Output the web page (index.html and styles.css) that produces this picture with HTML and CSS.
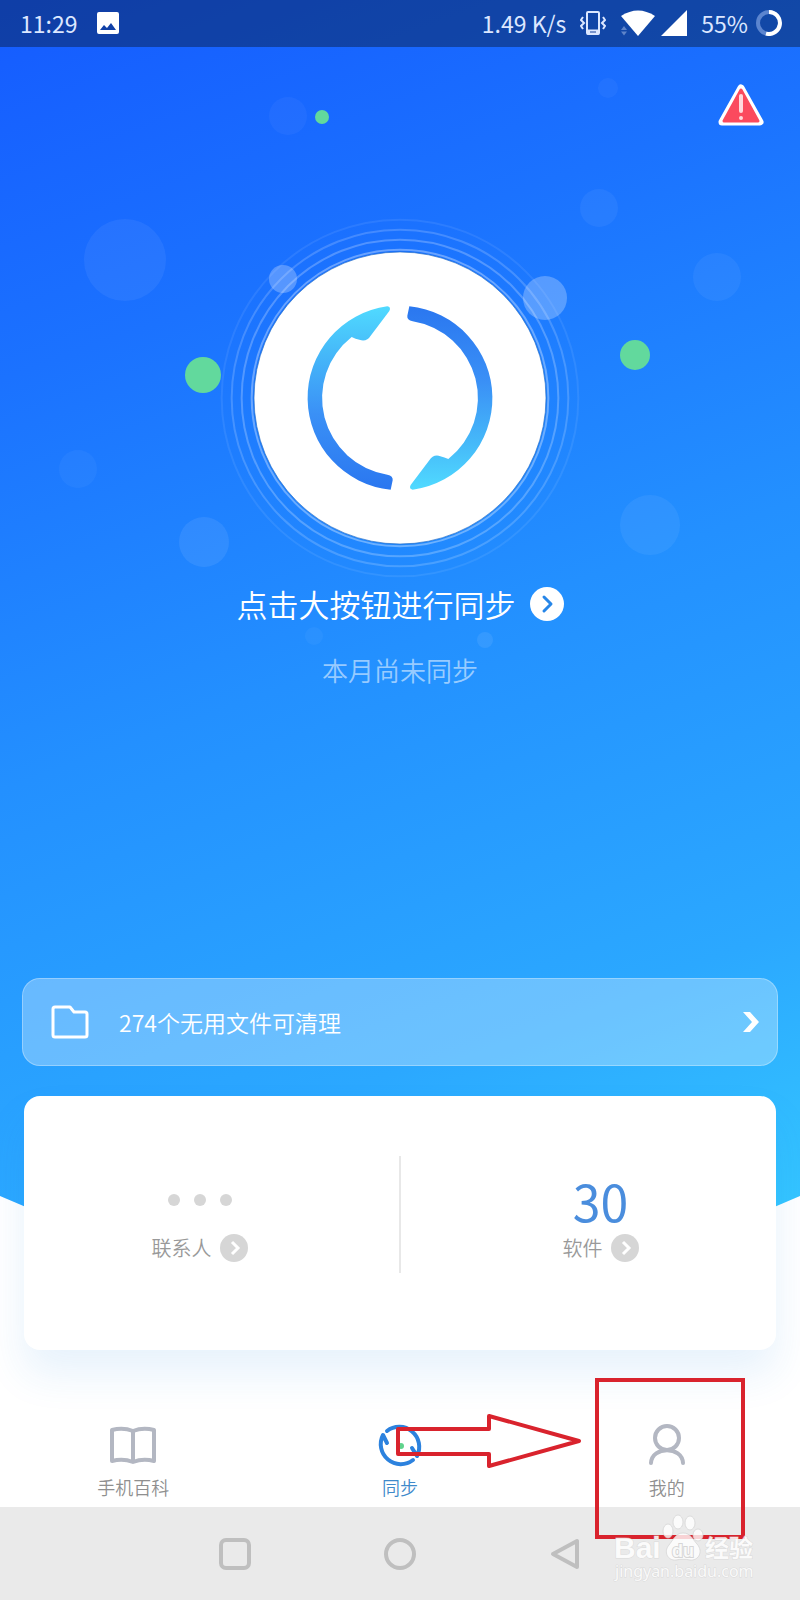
FILE: index.html
```
<!DOCTYPE html>
<html lang="zh-CN">

<head>
    <meta charset="UTF-8">
    <meta name="viewport" content="width=device-width, initial-scale=1.0">
    <title>同步</title>
    <link rel="stylesheet" href="styles.css">
</head>

<body>
    <div class="screen">
        <div class="hero">
            <!-- Floating bubbles -->
            <svg class="bubbles" viewBox="0 0 800 1230" preserveAspectRatio="xMidYMin slice" aria-hidden="true">
                <g fill="#fff" fill-opacity="0.06">
                    <circle cx="288" cy="116" r="19" fill-opacity="0.04" />
                    <circle cx="608" cy="88" r="10" fill-opacity="0.04" />
                    <circle cx="599" cy="208" r="19" fill-opacity="0.05" />
                    <circle cx="717" cy="277" r="24" fill-opacity="0.05" />
                    <circle cx="125" cy="260" r="41" />
                    <circle cx="78" cy="469" r="19" fill-opacity="0.04" />
                    <circle cx="204" cy="542" r="25" fill-opacity="0.08" />
                    <circle cx="650" cy="525" r="30" />
                    <circle cx="314" cy="636" r="9" fill-opacity="0.04" />
                    <circle cx="485" cy="640" r="8" fill-opacity="0.08" />
                    <circle cx="283" cy="279" r="14" fill-opacity="0.26" />
                    <circle cx="545" cy="298" r="22" fill-opacity="0.26" />
                </g>
                <g fill="#62d99d">
                    <circle cx="322" cy="117" r="7" />
                    <circle cx="635" cy="355" r="15" />
                    <circle cx="203" cy="375" r="18" />
                </g>
            </svg>

            <!-- Status bar -->
            <div class="status-bar">
                <span>11:29</span>
                <svg class="status-photo" width="22" height="22" viewBox="0 0 22 22">
                    <path fill="#fff" fill-rule="evenodd" d="M2 0h18a2 2 0 0 1 2 2v18a2 2 0 0 1-2 2H2a2 2 0 0 1-2-2V2a2 2 0 0 1 2-2zM3 18h16l-5-7-4 5-3-3z" />
                </svg>
                <span class="status-speed">1.49 K/s</span>
                <svg width="26" height="26" viewBox="0 0 26 26" fill="none" stroke="#dce7ff" stroke-width="2">
                    <rect x="7" y="2" width="12" height="22" rx="1" />
                    <path d="M7 22h12" stroke-width="5" />
                    <path d="M10 22h6" stroke="#123f98" stroke-width="1" />
                    <path d="M3 7L1 10l3 3-3 3 2 3M23 7l2 3-3 3 3 3-2 3" />
                </svg>
                <svg class="status-wifi" width="34" height="26" viewBox="0 0 34 26">
                    <path fill="#fff" d="M17 26L0 6Q17-5 34 6z" />
                    <path fill="#5f84c9" d="M0 20l3-4 3 4zM0 21.500h6l-3 4z" />
                </svg>
                <svg class="status-signal" width="26" height="26" viewBox="0 0 26 26">
                    <path fill="#fff" d="M26 0v26H0z" />
                </svg>
                <span class="status-battery">55%</span>
                <svg width="26" height="26" viewBox="0 0 26 26" fill="none" stroke-width="4">
                    <circle cx="13" cy="13" r="11" stroke="#5c85cf" />
                    <path d="M13 2a11 11 0 1 1-3 21.600" stroke="#fff" />
                </svg>
            </div>

            <button type="button" class="warning" aria-label="警告">
                <svg width="46" height="43" viewBox="0 0 46 43">
                    <path d="M23 4L42 38H4z" fill="#fff" stroke="#fff" stroke-width="7" stroke-linejoin="round" />
                    <path d="M23 6L40 37H6z" fill="#fb4a5e" stroke="#fb4a5e" stroke-width="3" stroke-linejoin="round" />
                    <path d="M23 12v15" stroke="#ffd9dd" stroke-width="4" stroke-linecap="round" />
                    <circle cx="23" cy="34" r="2" fill="#ffd9dd" />
                </svg>
            </button>

            <button type="button" class="sync-button" aria-label="同步">
                <svg width="360" height="360" viewBox="60 25 1080 1080">
                    <defs>
                        <linearGradient id="arc" gradientUnits="userSpaceOnUse" x1="700" y1="300" x2="700" y2="840">
                            <stop offset="0" stop-color="#2b78f0" />
                            <stop offset="0.4" stop-color="#3a90f6" />
                            <stop offset="0.75" stop-color="#46baf9" />
                            <stop offset="1" stop-color="#50daff" />
                        </linearGradient>
                        <path id="arrow" fill="url(#arc)" d="M628 290A277 277 0 0 1 638 840Q626 838 632 826L688 752Q698 735 716 738Q736 743 745 748A233 233 0 0 0 638 335Q620 331 622 318Z" />
                    </defs>
                    <g fill="none" stroke="#fff" stroke-width="6">
                        <circle cx="600" cy="565" r="535" stroke-opacity="0.08" />
                        <circle cx="600" cy="565" r="505" stroke-opacity="0.18" />
                        <circle cx="600" cy="565" r="475" stroke-opacity="0.24" />
                        <circle cx="600" cy="565" r="445" stroke-opacity="0.34" />
                    </g>
                    <circle cx="600" cy="565" r="438" fill="#fff" stroke="#2b6fc4" stroke-width="2" />
                    <use href="#arrow" />
                    <use href="#arrow" transform="rotate(180 600 565)" />
                </svg>
            </button>

            <a href="#" class="sync-hint">
                点击大按钮进行同步
                <svg width="34" height="34" viewBox="0 0 34 34">
                    <circle cx="17" cy="17" r="17" fill="#fff" />
                    <path d="M14 10l7 7-7 7" fill="none" stroke="#2786e8" stroke-width="3" stroke-linecap="round" stroke-linejoin="round" />
                </svg>
            </a>
            <p class="sync-status">本月尚未同步</p>

            <a href="#" class="clean-banner">
                <svg width="38" height="34" viewBox="0 0 38 34" fill="none" stroke="#fff" stroke-width="3" stroke-linejoin="round">
                    <path d="M4 2h15l4 5h11a2 2 0 0 1 2 2v21a2 2 0 0 1-2 2H4a2 2 0 0 1-2-2V4a2 2 0 0 1 2-2z" />
                </svg>
                <span class="clean-text">274个无用文件可清理</span>
                <svg width="16" height="20" viewBox="0 0 16 20">
                    <path fill="#fff" d="M0 0h7l9 10-9 10H0l9-10z" />
                </svg>
            </a>
        </div>

        <div class="card">
            <a href="#" class="stat">
                <span class="stat-value">
                    <span class="dot"></span><span class="dot"></span><span class="dot"></span>
                </span>
                <span class="stat-label">
                    联系人
                    <svg width="28" height="28" viewBox="0 0 28 28">
                        <circle cx="14" cy="14" r="14" fill="#d6d6d6" />
                        <path d="M12 8l6 6-6 6" fill="none" stroke="#fff" stroke-width="3" />
                    </svg>
                </span>
            </a>
            <div class="divider"></div>
            <a href="#" class="stat">
                <span class="stat-value">30</span>
                <span class="stat-label">
                    软件
                    <svg width="28" height="28" viewBox="0 0 28 28">
                        <circle cx="14" cy="14" r="14" fill="#d6d6d6" />
                        <path d="M12 8l6 6-6 6" fill="none" stroke="#fff" stroke-width="3" />
                    </svg>
                </span>
            </a>
        </div>

        <!-- Bottom tabs -->
        <nav class="tabs">
            <a href="#" class="tab">
                <svg width="46" height="44" viewBox="0 0 46 44" fill="none" stroke="#b3b7c2" stroke-width="4" stroke-linejoin="round">
                    <path d="M23 8Q13 4 2 7v31q11-3 21 1 10-4 21-1V7Q33 4 23 8zv31" />
                </svg>
                手机百科
            </a>
            <a href="#" class="tab active">
                <svg width="46" height="44" viewBox="0 0 46 44" fill="none" stroke="#2c82de" stroke-width="4" stroke-linecap="round" stroke-linejoin="round">
                    <path d="M10 8A20 20 0 0 1 40 33l-5-8" />
                    <path d="M36 37A20 20 0 0 1 6 12l4 8" />
                    <circle cx="24" cy="23" r="3" fill="#5fd38c" stroke="none" />
                </svg>
                同步
            </a>
            <a href="#" class="tab">
                <svg width="46" height="44" viewBox="0 0 46 44" fill="none" stroke="#b3b7c2" stroke-width="4" stroke-linecap="round">
                    <circle cx="23" cy="15" r="12" />
                    <path d="M7 40c1-17 31-17 32 0" />
                </svg>
                我的
            </a>
        </nav>

        <!-- System navigation -->
        <div class="system-nav">
            <button type="button" aria-label="最近任务">
                <svg width="32" height="32" viewBox="0 0 32 32" fill="none" stroke="#bfbfbf" stroke-width="4">
                    <rect x="2" y="2" width="28" height="28" rx="5" />
                </svg>
            </button>
            <button type="button" aria-label="主页">
                <svg width="32" height="32" viewBox="0 0 32 32" fill="none" stroke="#bfbfbf" stroke-width="4">
                    <circle cx="16" cy="16" r="14" />
                </svg>
            </button>
            <button type="button" aria-label="返回">
                <svg width="32" height="32" viewBox="0 0 32 32" fill="none" stroke="#bfbfbf" stroke-width="4" stroke-linejoin="round">
                    <path d="M28 3v26L4 16z" />
                </svg>
            </button>
        </div>

        <!-- Red arrow, frame and site watermark -->
        <svg class="overlay" width="420" height="230" viewBox="0 0 420 230">
            <g fill="none" stroke="#d9232d" stroke-width="4">
                <path d="M18 59h91V46l90 25-90 25V84H18z" stroke-linejoin="round" />
                <rect x="217" y="10" width="146" height="157" />
            </g>
            <g fill="#fff" fill-opacity="0.8" stroke="#d2d2d2" stroke-opacity="0.7">
                <ellipse cx="288" cy="161" rx="5" ry="7" />
                <ellipse cx="298" cy="152" rx="5" ry="7" />
                <ellipse cx="310" cy="153" rx="5" ry="7" />
                <ellipse cx="318" cy="165" rx="5" ry="6" />
                <path d="M303 163c8 0 10 7 14 11 7 8 1 17-7 16-4-1-10-1-14 0-8 1-13-8-7-15 4-5 7-12 14-12z" />
            </g>
            <g class="watermark">
                <text class="watermark-brand" x="234" y="188">Bai</text>
                <text class="watermark-du" x="292" y="187">du</text>
                <text class="watermark-name" x="325" y="187">经验</text>
                <text class="watermark-url" x="235" y="207">jingyan.baidu.com</text>
            </g>
        </svg>
    </div>
</body>

</html>
```
FILE: styles.css
```
* {
    box-sizing: border-box;
}

body {
    margin: 0;
    background-color: #fff;
    font-family: "Noto Sans CJK SC", sans-serif;
    font-weight: 350;
}

a {
    color: inherit;
    text-decoration: none;
}

button {
    padding: 0;
    border: none;
    background: none;
    cursor: pointer;
}

svg {
    display: block;
    flex-shrink: 0;
}

.screen {
    position: relative;
    display: flex;
    flex-direction: column;
    min-height: 100vh;
    overflow: hidden;
}

/* Blue area */
.hero {
    position: relative;
    display: flex;
    flex-direction: column;
    align-items: center;
    padding-bottom: 164px;
    color: #fff;
    background: linear-gradient(160deg, #155bff 0%, #1b72ff 25%, #2390ff 52%, #2ba8ff 80%, #35c8ff 100%);
    clip-path: polygon(0 0, 100% 0, 100% calc(100% - 34px), 90% 100%, 10% 100%, 0 calc(100% - 34px));
}

.bubbles {
    position: absolute;
    top: 0;
    left: 0;
    width: 100%;
    height: 100%;
}

.status-bar,
.warning,
.sync-button,
.sync-hint,
.sync-status,
.clean-banner {
    position: relative;
}

/* Status bar */
.status-bar {
    display: flex;
    align-items: center;
    align-self: stretch;
    height: 47px;
    padding: 0 18px 2px 20px;
    font-size: 23px;
    font-weight: 400;
    color: #dce7ff;
    background-color: rgba(8, 26, 60, 0.45);
}

.status-photo {
    margin-left: 20px;
}

.status-speed {
    margin-left: auto;
    margin-right: 14px;
}

.status-wifi {
    margin-left: 15px;
}

.status-signal {
    margin-left: 6px;
}

.status-battery {
    margin-left: 14px;
    margin-right: 8px;
}

.warning {
    align-self: flex-end;
    margin: 37px 36px 0 0;
}

/* Sync */
.sync-button {
    margin-top: 91px;
    border-radius: 50%;
}

.sync-hint {
    display: flex;
    align-items: center;
    gap: 14px;
    margin-top: 8px;
    font-size: 31px;
    line-height: 36px;
}

.sync-status {
    margin: 30px 0 0;
    font-size: 26px;
    line-height: 36px;
    color: rgba(255, 255, 255, 0.55);
}

.clean-banner {
    display: flex;
    align-items: center;
    align-self: stretch;
    height: 88px;
    margin: 290px 22px 0;
    padding: 0 18px 0 28px;
    border: 1px solid rgba(255, 255, 255, 0.3);
    border-radius: 18px;
    background-color: rgba(255, 255, 255, 0.3);
}

.clean-text {
    flex: 1;
    margin-left: 30px;
    font-size: 23px;
}

/* Card */
.card {
    position: relative;
    display: flex;
    height: 254px;
    margin: -134px 24px 0;
    padding-top: 60px;
    border-radius: 16px;
    background-color: #fff;
    box-shadow: 0 24px 40px rgba(40, 140, 230, 0.11);
}

.divider {
    width: 2px;
    height: 117px;
    background-color: #e8e8e8;
}

.stat {
    flex: 1;
    display: flex;
    flex-direction: column;
    align-items: center;
    padding: 14px 24px 0 0;
}

.divider + .stat {
    padding: 14px 0 0 24px;
}

.stat-value {
    display: flex;
    align-items: center;
    gap: 14px;
    height: 60px;
    font-size: 50px;
    font-weight: 400;
    line-height: 60px;
    color: #4a8ddd;
}

.dot {
    width: 12px;
    height: 12px;
    border-radius: 50%;
    background-color: #d6d6d6;
}

.stat-label {
    display: flex;
    align-items: center;
    gap: 8px;
    margin-top: 4px;
    font-size: 20px;
    line-height: 28px;
    color: #999;
}

/* Tabs */
.tabs {
    flex: 1;
    display: flex;
    align-items: flex-end;
    padding-bottom: 6px;
}

.tab {
    flex: 1;
    display: flex;
    flex-direction: column;
    align-items: center;
    gap: 6px;
    font-size: 18px;
    line-height: 28px;
    color: #8f8f8f;
}

.tab.active {
    color: #3f8acb;
}

.system-nav {
    display: flex;
    justify-content: center;
    align-items: center;
    gap: 133px;
    height: 93px;
    background-color: #eaeaea;
}

/* Overlay */
.overlay {
    position: absolute;
    right: 0;
    bottom: 0;
    pointer-events: none;
}

.watermark {
    fill: #fff;
    fill-opacity: 0.85;
    stroke: #cfcfcf;
    stroke-opacity: 0.6;
    paint-order: stroke;
}

.watermark-brand {
    font: bold 30px "Liberation Sans", sans-serif;
}

.watermark-du {
    font: bold 18px "Liberation Sans", sans-serif;
    stroke: #bdbdbd;
    stroke-width: 2px;
}

.watermark-name {
    font: bold 24px "Noto Sans CJK SC", sans-serif;
}

.watermark-url {
    font: 16px "Noto Sans", sans-serif;
}
```
